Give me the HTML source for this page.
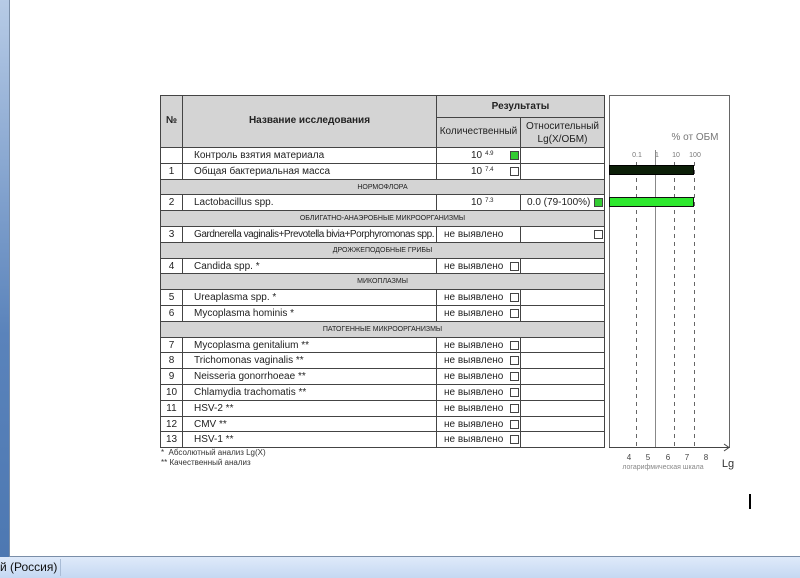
<!DOCTYPE html>
<html><head><meta charset="utf-8"><style>
*{margin:0;padding:0;box-sizing:border-box}
body{width:800px;height:578px;overflow:hidden;background:#fff;position:relative;font-family:"Liberation Sans",Arial,sans-serif;color:#222}
.a{position:absolute}
.strip{left:0;top:0;width:9px;height:557px;background:linear-gradient(#b7cbe6,#5a83bb 60%,#4d78b2)}
.pg{left:9px;top:0;width:791px;height:557px;border-left:1px solid #7a8ea8;border-bottom:1px solid #7a8ea8}
.sb{left:0;top:557px;width:800px;height:21px;background:linear-gradient(#dfeafa,#c5d8f2);font-size:12px;line-height:21px;color:#111}
.c{position:absolute;border:1px solid #444;font-size:10px;line-height:15px;white-space:nowrap;overflow:hidden}
.g{background:#d4d4d4}
.sec{background:#d4d4d4;text-align:center;font-size:7px}
.cb{position:absolute;width:9px;height:9px;border:1px solid #444;background:#fff}
.gr{background:#3c3}
sup{font-size:6px;line-height:0;position:relative;top:-3px;vertical-align:baseline;margin-left:3px}
</style></head><body>
<div class="a strip"></div>
<div class="a pg"></div>
<div class="a sb">й (Россия)<span style="position:absolute;left:60px;top:2px;height:17px;border-left:1px solid #a9bcd6"></span></div>

<div class="c g" style="left:160px;top:95px;width:23px;height:53px;text-align:center;line-height:50px;font-weight:bold">№</div>
<div class="c g" style="left:182px;top:95px;width:255px;height:53px;text-align:center;line-height:50px;font-weight:bold">Название исследования</div>
<div class="c g" style="left:436px;top:95px;width:169px;height:23px;text-align:center;line-height:21px;font-weight:bold">Результаты</div>
<div class="c g" style="left:436px;top:117px;width:85px;height:31px;text-align:center;line-height:28px">Количественный</div>
<div class="c g" style="left:520px;top:117px;width:85px;height:31px;text-align:center;line-height:13px;padding-top:2px">Относительный<br>Lg(X/ОБМ)</div>

<div id="rows"></div>
<script>
var R=[
["","Контроль взятия материала","10<sup>4.9</sup>",1,""],
["1","Общая бактериальная масса","10<sup>7.4</sup>",0,""],
["S","НОРМОФЛОРА"],
["2","Lactobacillus spp.","10<sup>7.3</sup>",-1,"0.0 (79-100%)"],
["S","ОБЛИГАТНО-АНАЭРОБНЫЕ МИКРООРГАНИЗМЫ"],
["3","<span style='letter-spacing:-0.45px'>Gardnerella vaginalis+Prevotella bivia+Porphyromonas spp.</span>","не выявлено",-2,""],
["S","ДРОЖЖЕПОДОБНЫЕ ГРИБЫ"],
["4","Candida spp. *","не выявлено",0,""],
["S","МИКОПЛАЗМЫ"],
["5","Ureaplasma spp. *","не выявлено",0,""],
["6","Mycoplasma hominis *","не выявлено",0,""],
["S","ПАТОГЕННЫЕ МИКРООРГАНИЗМЫ"],
["7","Mycoplasma genitalium **","не выявлено",0,""],
["8","Trichomonas vaginalis **","не выявлено",0,""],
["9","Neisseria gonorrhoeae **","не выявлено",0,""],
["10","Chlamydia trachomatis **","не выявлено",0,""],
["11","HSV-2 **","не выявлено",0,""],
["12","CMV **","не выявлено",0,""],
["13","HSV-1 **","не выявлено",0,""]];
var h='';
for(var i=0;i<R.length;i++){var t=147+i*15.8,r=R[i];
if(r[0]=="S"){h+='<div class="c sec" style="left:160px;top:'+t+'px;width:445px;height:16.8px">'+r[1]+'</div>';continue;}
var q=r[2].charAt(0)=='1';
h+='<div class="c" style="left:160px;top:'+t+'px;width:23px;height:16.8px;text-align:center">'+r[0]+'</div>';
h+='<div class="c" style="left:182px;top:'+t+'px;width:255px;height:16.8px;padding-left:11px">'+r[1]+'</div>';
h+='<div class="c" style="left:436px;top:'+t+'px;width:85px;height:16.8px;padding-left:'+(q?34:7)+'px">'+r[2]+'</div>';
h+='<div class="c" style="left:520px;top:'+t+'px;width:85px;height:16.8px;padding-left:6px">'+r[4]+'</div>';
if(r[3]>=0)h+='<div class="cb'+(r[3]?' gr':'')+'" style="left:510px;top:'+(t+4)+'px"></div>';
if(r[3]==-1)h+='<div class="cb gr" style="left:594px;top:'+(t+4)+'px"></div>';
if(r[3]==-2)h+='<div class="cb" style="left:594px;top:'+(t+4)+'px"></div>';
}
document.getElementById('rows').innerHTML=h;
</script>
<div class="a" style="left:161px;top:448px;font-size:8px;line-height:10px;color:#333">*&nbsp; Абсолютный анализ Lg(X)<br>** Качественный анализ</div>

<svg class="a" style="left:600px;top:90px" width="200" height="390">
<rect x="9.5" y="5.5" width="120" height="352" fill="#fff" stroke="#666"/>
<text x="95" y="50" font-size="10" fill="#777" text-anchor="middle" font-family="Liberation Sans">% от ОБМ</text>
<g font-size="7" fill="#777" font-family="Liberation Sans" text-anchor="middle">
<text x="37" y="67">0.1</text><text x="57" y="67">1</text><text x="76" y="67">10</text><text x="95" y="67">100</text></g>
<g stroke="#666" stroke-dasharray="4,4"><line x1="36.5" y1="72" x2="36.5" y2="357"/><line x1="74.5" y1="72" x2="74.5" y2="357"/><line x1="94.5" y1="72" x2="94.5" y2="357"/></g>
<line x1="55.5" y1="60" x2="55.5" y2="357" stroke="#888"/>
<rect x="9.5" y="75.5" width="84" height="9" fill="#0c1f08" stroke="#000"/>
<rect x="9.5" y="107.5" width="84" height="9" fill="#2ee82e" stroke="#111"/>
<line x1="9" y1="357.5" x2="128" y2="357.5" stroke="#444"/>
<path d="M124 354 L129 357.5 L124 361" fill="none" stroke="#444"/>
<g font-size="8" fill="#444" font-family="Liberation Sans" text-anchor="middle">
<text x="29" y="370">4</text><text x="48" y="370">5</text><text x="68" y="370">6</text><text x="87" y="370">7</text><text x="106" y="370">8</text></g>
<text x="63" y="379" font-size="7" fill="#888" text-anchor="middle" font-family="Liberation Sans">логарифмическая шкала</text>
<text x="128" y="377" font-size="11" fill="#333" text-anchor="middle" font-family="Liberation Sans">Lg</text>
</svg>
<div class="a" style="left:749px;top:494px;width:2px;height:15px;background:#000"></div>
</body></html>
